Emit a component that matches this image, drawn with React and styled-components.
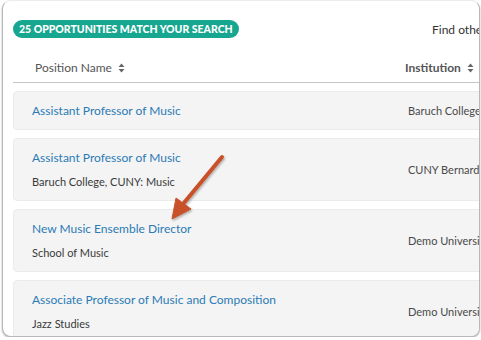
import React from 'react';
import styled, { createGlobalStyle } from 'styled-components';

const GlobalStyle = createGlobalStyle`
  html, body {
    margin: 0;
    padding: 0;
    background: #ffffff;
  }
  body {
    font-family: Lato, "Open Sans", sans-serif;
  }
`;

const Frame = styled.div`
  position: relative;
  margin-left: 2px;
  width: 476px;
  height: 335px;
  border: 1px solid #b8b8b8;
  border-top-color: #ececec;
  border-radius: 9px;
  box-shadow: 0 1px 2px rgba(0, 0, 0, 0.35);
  overflow: hidden;
  background: #fff;
`;

const Content = styled.div`
  width: 640px;
  padding: 19px 0 0 10px;
`;

const Columns = styled.div`
  display: grid;
  grid-template-columns: 392px 1fr;
  align-items: center;
`;

const TopBar = styled(Columns)`
  height: 18px;
`;

const Badge = styled.span`
  justify-self: start;
  display: inline-flex;
  align-items: center;
  height: 18px;
  padding: 0 6px;
  border-radius: 9px;
  background: #17a68f;
  color: #fff;
  font-size: 10.5px;
  font-weight: 900;
  white-space: nowrap;
`;

const FindOther = styled.span`
  padding-left: 27px;
  font-size: 12px;
  color: #333;
  white-space: nowrap;
`;

const HeaderRow = styled(Columns)`
  margin-top: 17px;
  height: 21px;
  padding-bottom: 6px;
  border-bottom: 1px solid #c4c4c4;
  align-items: end;
`;

const HeaderCell = styled.div`
  display: flex;
  align-items: center;
  gap: 6px;
  padding-left: ${(p) => p.$indent || 0}px;
  font-size: 12px;
  font-weight: ${(p) => (p.$bold ? 700 : 400)};
  color: #555;
  line-height: 16px;
  white-space: nowrap;
`;

const List = styled.div`
  display: flex;
  flex-direction: column;
  gap: 8px;
  margin-top: 8px;
`;

const Card = styled(Columns)`
  background: #f4f4f4;
  border: 1px solid #ebebeb;
  border-radius: 4px;
  padding: 10px 0;
`;

const Main = styled.div`
  padding-left: 18px;
  display: flex;
  flex-direction: column;
  gap: 7px;
`;

const Title = styled.a`
  font-size: 12px;
  line-height: 17px;
  color: #2b7bb4;
  text-decoration: none;
  white-space: nowrap;
`;

const Sub = styled.div`
  font-size: 11px;
  line-height: 17px;
  color: #3a3a3a;
  white-space: nowrap;
`;

const Institution = styled.div`
  padding-left: 2px;
  font-size: 11px;
  color: #4a4a4a;
  white-space: nowrap;
`;

const Arrow = styled.svg`
  position: absolute;
  left: 0;
  top: 0;
  pointer-events: none;
`;

const SortIcon = () => (
  <svg width="7" height="10" viewBox="0 0 7 10">
    <path d="M3.5 0.5 L6.5 4 L0.5 4 Z" fill="#666" />
    <path d="M3.5 9.5 L6.5 6 L0.5 6 Z" fill="#666" />
  </svg>
);

const jobs = [
  { title: 'Assistant Professor of Music', dept: null, inst: 'Baruch College, CUNY' },
  { title: 'Assistant Professor of Music', dept: 'Baruch College, CUNY: Music', inst: 'CUNY Bernard M. Baruch College' },
  { title: 'New Music Ensemble Director', dept: 'School of Music', inst: 'Demo University' },
  { title: 'Associate Professor of Music and Composition', dept: 'Jazz Studies', inst: 'Demo University' },
];

export default function App() {
  return (
    <>
      <GlobalStyle />
      <Frame>
        <Content>
          <TopBar>
            <Badge>25 OPPORTUNITIES MATCH YOUR SEARCH</Badge>
            <FindOther>Find other opportunities</FindOther>
          </TopBar>
          <HeaderRow>
            <HeaderCell $indent={22}>
              Position Name <SortIcon />
            </HeaderCell>
            <HeaderCell $bold>
              Institution <SortIcon />
            </HeaderCell>
          </HeaderRow>
          <List>
            {jobs.map((job, i) => (
              <Card key={i}>
                <Main>
                  <Title href="#">{job.title}</Title>
                  {job.dept && <Sub>{job.dept}</Sub>}
                </Main>
                <Institution>{job.inst}</Institution>
              </Card>
            ))}
          </List>
        </Content>
        <Arrow width="478" height="337" viewBox="3 1 478 337">
          <defs>
            <filter id="arrowShadow" x="-20%" y="-20%" width="140%" height="140%">
              <feDropShadow dx="1" dy="1.5" stdDeviation="1.2" floodColor="#000" floodOpacity="0.3" />
            </filter>
          </defs>
          <g filter="url(#arrowShadow)" fill="#c9512b" stroke="#c9512b">
            <line x1="222" y1="157" x2="183" y2="204" strokeWidth="4" strokeLinecap="round" />
            <polygon points="172,219 176,198 191,209" strokeWidth="1" strokeLinejoin="round" />
          </g>
        </Arrow>
      </Frame>
    </>
  );
}
